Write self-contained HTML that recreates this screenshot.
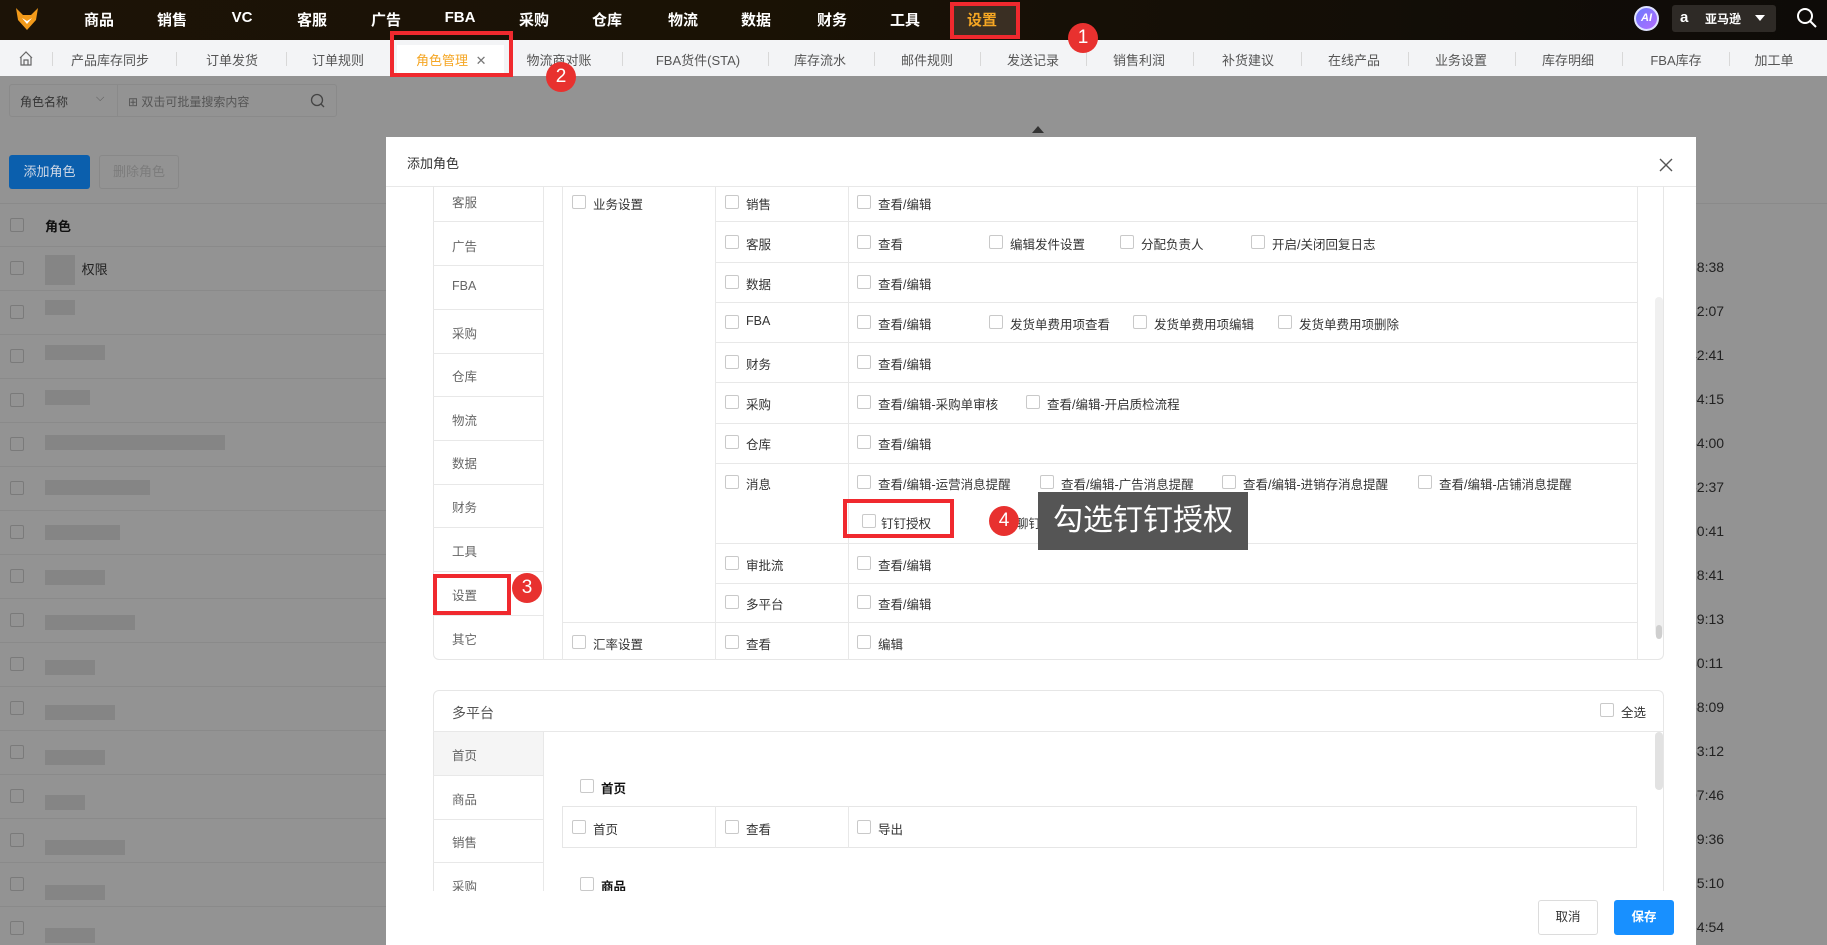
<!DOCTYPE html>
<html><head><meta charset="utf-8">
<style>
*{margin:0;padding:0;box-sizing:border-box}
html,body{width:1827px;height:945px;overflow:hidden}
body{position:relative;background:#939393;font-family:"Liberation Sans","Noto Sans CJK SC",sans-serif;font-size:13px;color:#333}
.a{position:absolute;white-space:nowrap}
.top{left:0;top:0;width:1827px;height:40px;background:linear-gradient(90deg,#1c1307,#1a1205 40%,#0e0b08)}
.nav{top:9px;color:#fff;font-size:15px;font-weight:bold;transform:translateX(-50%)}
.tabs{left:0;top:40px;width:1827px;height:36px;background:#f3f4f6}
.tab{top:50px;color:#555;font-size:13px;transform:translateX(-50%)}
.sep{top:52px;width:1px;height:14px;background:#d8d8d8}
.badge{width:30px;height:30px;border-radius:50%;background:#e8312f;color:#fff;font-size:19px;text-align:center;line-height:30px;transform:translate(-50%,-50%)}
.rbox{border:4px solid #f0292e}
.row{left:0;width:386px;height:1px;background:#8a8a8a}
.cb{width:14px;height:14px;border:1px solid #c9c9c9;border-radius:2px;background:#fff}
.cbd{width:14px;height:14px;border:1px solid #7a7a7a;border-radius:2px}
.blk{background:#858585}
.modal{left:386px;top:137px;width:1310px;height:808px;background:#fff}
.t{font-size:12.5px;color:#333}
.hl{height:1px;background:#e8e8e8}
.vl{width:1px;background:#e8e8e8}
.nv{color:#666;font-size:12.5px}
</style></head><body>
<div class="a top"></div>
<svg class="a" style="left:14px;top:6px" width="26" height="26" viewBox="0 0 26 26"><path d="M2 2 L9 9 L17 9 L24 2 L22 14 L13 24 L4 14 Z" fill="#f29a1a"/><path d="M8 12 L13 18 L18 12 L13 15Z" fill="#fff"/></svg>
<div class="a nav" style="left:99px">商品</div>
<div class="a nav" style="left:172px">销售</div>
<div class="a nav" style="left:242px">VC</div>
<div class="a nav" style="left:312px">客服</div>
<div class="a nav" style="left:386px">广告</div>
<div class="a nav" style="left:460px">FBA</div>
<div class="a nav" style="left:534px">采购</div>
<div class="a nav" style="left:607px">仓库</div>
<div class="a nav" style="left:683px">物流</div>
<div class="a nav" style="left:756px">数据</div>
<div class="a nav" style="left:832px">财务</div>
<div class="a nav" style="left:905px">工具</div>
<div class="a" style="left:954px;top:4px;width:62px;height:32px;background:#3a2f23"></div>
<div class="a nav" style="left:982px;color:#f5a623">设置</div>
<div class="a rbox" style="left:950px;top:2px;width:70px;height:37px"></div>
<div class="a" style="left:1634px;top:6px;width:25px;height:25px;border-radius:50%;background:linear-gradient(135deg,#6a7bff,#b46cff);border:2px solid #dfe3ff;color:#fff;font-size:11px;font-weight:bold;text-align:center;line-height:21px;font-style:italic">AI</div>
<div class="a" style="left:1672px;top:5px;width:104px;height:27px;background:#2e2a26;border-radius:3px"></div>
<div class="a" style="left:1680px;top:9px;color:#fff;font-size:15px;font-weight:bold">a</div>
<div class="a" style="left:1705px;top:10px;color:#fff;font-size:12px;font-weight:bold">亚马逊</div>
<div class="a" style="left:1755px;top:15px;width:0;height:0;border-left:5px solid transparent;border-right:5px solid transparent;border-top:6px solid #fff"></div>
<svg class="a" style="left:1796px;top:7px" width="22" height="22" viewBox="0 0 22 22"><circle cx="9" cy="9" r="7" fill="none" stroke="#fff" stroke-width="2"/><path d="M14 14 L20 20" stroke="#fff" stroke-width="2"/></svg>
<div class="a tabs"></div>
<svg class="a" style="left:18px;top:51px" width="16" height="15" viewBox="0 0 16 15"><path d="M2 7 L8 1 L14 7 M3 6 V14 H13 V6 M6 14 V9 H10 V14" fill="none" stroke="#666" stroke-width="1.2"/></svg>
<div class="a sep" style="left:52px"></div>
<div class="a tab" style="left:110px">产品库存同步</div>
<div class="a sep" style="left:176px"></div>
<div class="a tab" style="left:232px">订单发货</div>
<div class="a sep" style="left:286px"></div>
<div class="a tab" style="left:338px">订单规则</div>
<div class="a" style="left:397px;top:45px;width:107px;height:31px;background:#fff"></div>
<div class="a tab" style="transform:none;left:416px;color:#f5a623">角色管理 <span style="color:#777;margin-left:4px">✕</span></div>
<div class="a tab" style="left:559px">物流商对账</div>
<div class="a sep" style="left:622px"></div>
<div class="a tab" style="left:698px">FBA货件(STA)</div>
<div class="a sep" style="left:768px"></div>
<div class="a tab" style="left:820px">库存流水</div>
<div class="a sep" style="left:874px"></div>
<div class="a tab" style="left:927px">邮件规则</div>
<div class="a sep" style="left:980px"></div>
<div class="a tab" style="left:1033px">发送记录</div>
<div class="a sep" style="left:1086px"></div>
<div class="a tab" style="left:1139px">销售利润</div>
<div class="a sep" style="left:1193px"></div>
<div class="a tab" style="left:1248px">补货建议</div>
<div class="a sep" style="left:1301px"></div>
<div class="a tab" style="left:1354px">在线产品</div>
<div class="a sep" style="left:1408px"></div>
<div class="a tab" style="left:1461px">业务设置</div>
<div class="a sep" style="left:1515px"></div>
<div class="a tab" style="left:1568px">库存明细</div>
<div class="a sep" style="left:1622px"></div>
<div class="a tab" style="left:1676px">FBA库存</div>
<div class="a sep" style="left:1729px"></div>
<div class="a tab" style="left:1774px">加工单</div>
<div class="a rbox" style="left:390px;top:31px;width:123px;height:46px"></div>
<div class="a" style="left:9px;top:84px;width:328px;height:33px;border:1px solid #8a8a8a;border-radius:3px"></div>
<div class="a" style="left:117px;top:84px;width:1px;height:33px;background:#8a8a8a"></div>
<div class="a" style="left:20px;top:93px;font-size:12px;color:#333">角色名称</div>
<div class="a" style="left:96px;top:92px;font-size:11px;color:#555">⌵</div>
<div class="a" style="left:128px;top:93px;font-size:12px;color:#555">⊞ 双击可批量搜索内容</div>
<svg class="a" style="left:310px;top:93px" width="16" height="16"><circle cx="7" cy="7" r="5.5" fill="none" stroke="#444" stroke-width="1.3"/><path d="M11 11 L14 14" stroke="#444" stroke-width="1.3"/></svg>
<div class="a" style="left:9px;top:155px;width:81px;height:34px;background:#0b5fad;border-radius:3px;color:#cfd8e6;font-size:13px;text-align:center;line-height:34px">添加角色</div>
<div class="a" style="left:99px;top:155px;width:80px;height:34px;border:1px solid #888;border-radius:3px;color:#7c7c7c;font-size:13px;text-align:center;line-height:32px">删除角色</div>
<div class="a row" style="top:203px"></div>
<div class="a cbd" style="left:10px;top:218px"></div>
<div class="a" style="left:45px;top:216px;font-weight:bold;font-size:13px;color:#111">角色</div>
<div class="a row" style="top:246px"></div><div class="a row" style="top:290px"></div><div class="a row" style="top:334px"></div><div class="a row" style="top:378px"></div><div class="a row" style="top:422px"></div><div class="a row" style="top:466px"></div><div class="a row" style="top:510px"></div><div class="a row" style="top:554px"></div><div class="a row" style="top:598px"></div><div class="a row" style="top:642px"></div><div class="a row" style="top:686px"></div><div class="a row" style="top:730px"></div><div class="a row" style="top:774px"></div><div class="a row" style="top:818px"></div><div class="a row" style="top:862px"></div><div class="a row" style="top:906px"></div>
<div class="a cbd" style="left:10px;top:261px"></div><div class="a cbd" style="left:10px;top:305px"></div><div class="a cbd" style="left:10px;top:349px"></div><div class="a cbd" style="left:10px;top:393px"></div><div class="a cbd" style="left:10px;top:437px"></div><div class="a cbd" style="left:10px;top:481px"></div><div class="a cbd" style="left:10px;top:525px"></div><div class="a cbd" style="left:10px;top:569px"></div><div class="a cbd" style="left:10px;top:613px"></div><div class="a cbd" style="left:10px;top:657px"></div><div class="a cbd" style="left:10px;top:701px"></div><div class="a cbd" style="left:10px;top:745px"></div><div class="a cbd" style="left:10px;top:789px"></div><div class="a cbd" style="left:10px;top:833px"></div><div class="a cbd" style="left:10px;top:877px"></div><div class="a cbd" style="left:10px;top:921px"></div>
<div class="a" style="left:60px;top:259px;color:#222">&nbsp;&nbsp;&nbsp;&nbsp;&nbsp;&nbsp;权限</div>
<div class="a blk" style="left:45px;top:255px;width:30px;height:30px"></div>
<div class="a blk" style="left:45px;top:300px;width:30px;height:15px"></div>
<div class="a blk" style="left:45px;top:345px;width:60px;height:15px"></div>
<div class="a blk" style="left:45px;top:390px;width:45px;height:15px"></div>
<div class="a blk" style="left:45px;top:435px;width:180px;height:15px"></div>
<div class="a blk" style="left:45px;top:480px;width:105px;height:15px"></div>
<div class="a blk" style="left:45px;top:525px;width:75px;height:15px"></div>
<div class="a blk" style="left:45px;top:570px;width:60px;height:15px"></div>
<div class="a blk" style="left:45px;top:615px;width:90px;height:15px"></div>
<div class="a blk" style="left:45px;top:660px;width:50px;height:15px"></div>
<div class="a blk" style="left:45px;top:705px;width:70px;height:15px"></div>
<div class="a blk" style="left:45px;top:750px;width:60px;height:15px"></div>
<div class="a blk" style="left:45px;top:795px;width:40px;height:15px"></div>
<div class="a blk" style="left:45px;top:840px;width:80px;height:15px"></div>
<div class="a blk" style="left:45px;top:885px;width:60px;height:15px"></div>
<div class="a blk" style="left:45px;top:928px;width:50px;height:15px"></div>
<div class="a" style="left:1696px;top:203px;width:131px;height:1px;background:#8a8a8a"></div>
<div class="a" style="left:1689px;top:245px;line-height:44px;font-size:14px;color:#222;white-space:pre">38:38
32:07
42:41
54:15
54:00
52:37
20:41
18:41
29:13
30:11
58:09
53:12
07:46
59:36
15:10
54:54</div>
<div class="a" style="left:1032px;top:126px;width:0;height:0;border-left:6px solid transparent;border-right:6px solid transparent;border-bottom:7px solid #333"></div>
<div class="a modal"></div>
<div class="a" style="left:407px;top:153px;font-size:13px;color:#333">添加角色</div>
<svg class="a" style="left:1659px;top:158px" width="14" height="14"><path d="M1 1 L13 13 M13 1 L1 13" stroke="#555" stroke-width="1.4"/></svg>
<div class="a hl" style="left:386px;top:186px;width:1310px"></div>
<div class="a" style="left:433px;top:186px;width:1231px;height:474px;border:1px solid #e6e6e6;border-top:none;border-radius:0 0 6px 6px"></div>
<div class="a vl" style="left:543px;top:186px;height:474px"></div>
<div class="a vl" style="left:562px;top:186px;height:474px"></div>
<div class="a vl" style="left:715px;top:186px;height:474px"></div>
<div class="a vl" style="left:848px;top:186px;height:474px"></div>
<div class="a vl" style="left:1637px;top:186px;height:474px"></div>
<div class="a hl" style="left:433px;top:221px;width:110px"></div><div class="a hl" style="left:433px;top:265px;width:110px"></div><div class="a hl" style="left:433px;top:309px;width:110px"></div><div class="a hl" style="left:433px;top:353px;width:110px"></div><div class="a hl" style="left:433px;top:396px;width:110px"></div><div class="a hl" style="left:433px;top:440px;width:110px"></div><div class="a hl" style="left:433px;top:484px;width:110px"></div><div class="a hl" style="left:433px;top:527px;width:110px"></div><div class="a hl" style="left:433px;top:571px;width:110px"></div><div class="a hl" style="left:433px;top:615px;width:110px"></div>
<div class="a nv" style="left:452px;top:192px">客服</div>
<div class="a nv" style="left:452px;top:236px">广告</div>
<div class="a nv" style="left:452px;top:279px">FBA</div>
<div class="a nv" style="left:452px;top:323px">采购</div>
<div class="a nv" style="left:452px;top:366px">仓库</div>
<div class="a nv" style="left:452px;top:410px">物流</div>
<div class="a nv" style="left:452px;top:453px">数据</div>
<div class="a nv" style="left:452px;top:497px">财务</div>
<div class="a nv" style="left:452px;top:541px">工具</div>
<div class="a nv" style="left:452px;top:585px">设置</div>
<div class="a nv" style="left:452px;top:629px">其它</div>
<div class="a hl" style="left:715px;top:221px;width:922px"></div>
<div class="a hl" style="left:715px;top:262px;width:922px"></div>
<div class="a hl" style="left:715px;top:302px;width:922px"></div>
<div class="a hl" style="left:715px;top:342px;width:922px"></div>
<div class="a hl" style="left:715px;top:382px;width:922px"></div>
<div class="a hl" style="left:715px;top:423px;width:922px"></div>
<div class="a hl" style="left:715px;top:463px;width:922px"></div>
<div class="a hl" style="left:715px;top:543px;width:922px"></div>
<div class="a hl" style="left:715px;top:583px;width:922px"></div>
<div class="a hl" style="left:562px;top:622px;width:1075px"></div>
<div class="a cb" style="left:572px;top:195px"></div><div class="a t" style="left:593px;top:194px">业务设置</div>
<div class="a cb" style="left:725px;top:195px"></div><div class="a t" style="left:746px;top:194px">销售</div>
<div class="a cb" style="left:725px;top:235px"></div><div class="a t" style="left:746px;top:234px">客服</div>
<div class="a cb" style="left:725px;top:275px"></div><div class="a t" style="left:746px;top:274px">数据</div>
<div class="a cb" style="left:725px;top:315px"></div><div class="a t" style="left:746px;top:314px">FBA</div>
<div class="a cb" style="left:725px;top:355px"></div><div class="a t" style="left:746px;top:354px">财务</div>
<div class="a cb" style="left:725px;top:395px"></div><div class="a t" style="left:746px;top:394px">采购</div>
<div class="a cb" style="left:725px;top:435px"></div><div class="a t" style="left:746px;top:434px">仓库</div>
<div class="a cb" style="left:725px;top:475px"></div><div class="a t" style="left:746px;top:474px">消息</div>
<div class="a cb" style="left:725px;top:556px"></div><div class="a t" style="left:746px;top:555px">审批流</div>
<div class="a cb" style="left:725px;top:595px"></div><div class="a t" style="left:746px;top:594px">多平台</div>
<div class="a cb" style="left:572px;top:635px"></div><div class="a t" style="left:593px;top:634px">汇率设置</div>
<div class="a cb" style="left:725px;top:635px"></div><div class="a t" style="left:746px;top:634px">查看</div>
<div class="a cb" style="left:857px;top:195px"></div><div class="a t" style="left:878px;top:194px">查看/编辑</div>
<div class="a cb" style="left:857px;top:235px"></div><div class="a t" style="left:878px;top:234px">查看</div>
<div class="a cb" style="left:989px;top:235px"></div><div class="a t" style="left:1010px;top:234px">编辑发件设置</div>
<div class="a cb" style="left:1120px;top:235px"></div><div class="a t" style="left:1141px;top:234px">分配负责人</div>
<div class="a cb" style="left:1251px;top:235px"></div><div class="a t" style="left:1272px;top:234px">开启/关闭回复日志</div>
<div class="a cb" style="left:857px;top:275px"></div><div class="a t" style="left:878px;top:274px">查看/编辑</div>
<div class="a cb" style="left:857px;top:315px"></div><div class="a t" style="left:878px;top:314px">查看/编辑</div>
<div class="a cb" style="left:989px;top:315px"></div><div class="a t" style="left:1010px;top:314px">发货单费用项查看</div>
<div class="a cb" style="left:1133px;top:315px"></div><div class="a t" style="left:1154px;top:314px">发货单费用项编辑</div>
<div class="a cb" style="left:1278px;top:315px"></div><div class="a t" style="left:1299px;top:314px">发货单费用项删除</div>
<div class="a cb" style="left:857px;top:355px"></div><div class="a t" style="left:878px;top:354px">查看/编辑</div>
<div class="a cb" style="left:857px;top:395px"></div><div class="a t" style="left:878px;top:394px">查看/编辑-采购单审核</div>
<div class="a cb" style="left:1026px;top:395px"></div><div class="a t" style="left:1047px;top:394px">查看/编辑-开启质检流程</div>
<div class="a cb" style="left:857px;top:435px"></div><div class="a t" style="left:878px;top:434px">查看/编辑</div>
<div class="a cb" style="left:857px;top:475px"></div><div class="a t" style="left:878px;top:474px">查看/编辑-运营消息提醒</div>
<div class="a cb" style="left:1040px;top:475px"></div><div class="a t" style="left:1061px;top:474px">查看/编辑-广告消息提醒</div>
<div class="a cb" style="left:1222px;top:475px"></div><div class="a t" style="left:1243px;top:474px">查看/编辑-进销存消息提醒</div>
<div class="a cb" style="left:1418px;top:475px"></div><div class="a t" style="left:1439px;top:474px">查看/编辑-店铺消息提醒</div>
<div class="a cb" style="left:862px;top:514px"></div><div class="a t" style="left:881px;top:513px">钉钉授权</div>
<div class="a t" style="left:1016px;top:513px">聊钉</div>
<div class="a cb" style="left:857px;top:556px"></div><div class="a t" style="left:878px;top:555px">查看/编辑</div>
<div class="a cb" style="left:857px;top:595px"></div><div class="a t" style="left:878px;top:594px">查看/编辑</div>
<div class="a cb" style="left:857px;top:635px"></div><div class="a t" style="left:878px;top:634px">编辑</div>
<div class="a" style="left:1655px;top:297px;width:8px;height:340px;border-radius:4px;background:#f0f0f0"></div>
<div class="a" style="left:1656px;top:625px;width:6px;height:14px;border-radius:3px;background:#cfcfcf"></div>
<div class="a rbox" style="left:843px;top:499px;width:111px;height:39px"></div>
<div class="a" style="left:1038px;top:492px;width:210px;height:58px;background:#555;color:#fff;font-size:30px;line-height:58px;text-align:center">勾选钉钉授权</div>
<div class="a badge" style="left:1004px;top:521px">4</div>
<div class="a rbox" style="left:433px;top:574px;width:78px;height:41px"></div>
<div class="a badge" style="left:527px;top:588px">3</div>
<div class="a badge" style="left:561px;top:77px">2</div>
<div class="a badge" style="left:1083px;top:38px">1</div>
<div class="a" style="left:433px;top:690px;width:1231px;height:201px;border:1px solid #e6e6e6;border-bottom:none;border-radius:6px 6px 0 0"></div>
<div class="a nv" style="left:452px;top:703px;font-size:14px;color:#555">多平台</div>
<div class="a cb" style="left:1600px;top:703px"></div><div class="a t" style="left:1621px;top:702px">全选</div>
<div class="a hl" style="left:433px;top:731px;width:1231px"></div>
<div class="a" style="left:434px;top:732px;width:109px;height:43px;background:#f5f5f5"></div>
<div class="a vl" style="left:543px;top:731px;height:160px"></div>
<div class="a hl" style="left:433px;top:775px;width:110px"></div><div class="a hl" style="left:433px;top:819px;width:110px"></div><div class="a hl" style="left:433px;top:862px;width:110px"></div>
<div class="a nv" style="left:452px;top:745px">首页</div>
<div class="a nv" style="left:452px;top:789px">商品</div>
<div class="a nv" style="left:452px;top:832px">销售</div>
<div class="a nv" style="left:452px;top:876px">采购</div>
<div class="a cb" style="left:580px;top:779px"></div><div class="a t" style="left:601px;top:778px;font-weight:bold;color:#111">首页</div>
<div class="a" style="left:562px;top:806px;width:1075px;height:42px;border:1px solid #e6e6e6"></div>
<div class="a vl" style="left:715px;top:806px;height:42px"></div>
<div class="a vl" style="left:848px;top:806px;height:42px"></div>
<div class="a cb" style="left:572px;top:820px"></div><div class="a t" style="left:593px;top:819px">首页</div>
<div class="a cb" style="left:725px;top:820px"></div><div class="a t" style="left:746px;top:819px">查看</div>
<div class="a cb" style="left:857px;top:820px"></div><div class="a t" style="left:878px;top:819px">导出</div>
<div class="a cb" style="left:580px;top:877px"></div><div class="a t" style="left:601px;top:876px;font-weight:bold;color:#111">商品</div>
<div class="a" style="left:1655px;top:732px;width:8px;height:58px;border-radius:4px;background:#e2e2e2"></div>
<div class="a" style="left:386px;top:891px;width:1310px;height:54px;background:#fff"></div>
<div class="a" style="left:1538px;top:900px;width:60px;height:35px;border:1px solid #dcdcdc;border-radius:3px;text-align:center;line-height:33px;font-size:12.5px">取消</div>
<div class="a" style="left:1614px;top:900px;width:60px;height:35px;background:#1890ff;border-radius:3px;color:#fff;text-align:center;line-height:35px;font-size:12.5px;font-weight:bold">保存</div>
</body></html>
